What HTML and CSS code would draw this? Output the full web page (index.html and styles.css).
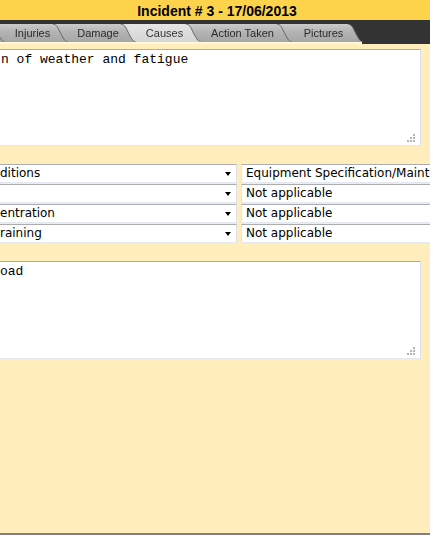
FILE: index.html
```html
<!DOCTYPE html>
<html>
<head>
<meta charset="utf-8">
<link rel="stylesheet" href="styles.css">
</head>
<body>
<div class="page">
  <header class="titlebar">Incident # 3 - 17/06/2013</header>
  <nav class="tabbar">
    <div class="tabstrip">
      <div class="tab tab-general"><div class="tab-face"></div></div>
      <div class="tab tab-injuries"><div class="tab-face"><span>Injuries</span></div></div>
      <div class="tab tab-damage"><div class="tab-face"><span>Damage</span></div></div>
      <div class="tab tab-causes active"><div class="tab-face"><span>Causes</span></div></div>
      <div class="tab tab-action"><div class="tab-face"><span>Action Taken</span></div></div>
      <div class="tab tab-pictures"><div class="tab-face"><span>Pictures</span></div></div>
    </div>
  </nav>
  <main class="form">
    <div class="textbox tb-first">n of weather and fatigue<svg class="grip" width="8" height="8" viewBox="0 0 8 8"><rect x="6" y="0" width="2" height="2"/><rect x="3" y="3" width="2" height="2"/><rect x="6" y="3" width="2" height="2"/><rect x="0" y="6" width="2" height="2"/><rect x="3" y="6" width="2" height="2"/><rect x="6" y="6" width="2" height="2"/></svg></div>
    <div class="select-grid">
      <div class="select"><span class="select-text">ditions</span><span class="arrow"></span></div>
      <div class="select select-right"><span class="select-text">Equipment Specification/Mainte</span></div>
      <div class="select"><span class="select-text"></span><span class="arrow"></span></div>
      <div class="select select-right"><span class="select-text">Not applicable</span></div>
      <div class="select"><span class="select-text">entration</span><span class="arrow"></span></div>
      <div class="select select-right"><span class="select-text">Not applicable</span></div>
      <div class="select"><span class="select-text">raining</span><span class="arrow"></span></div>
      <div class="select select-right"><span class="select-text">Not applicable</span></div>
    </div>
    <div class="textbox tb-second">oad<svg class="grip" width="8" height="8" viewBox="0 0 8 8"><rect x="6" y="0" width="2" height="2"/><rect x="3" y="3" width="2" height="2"/><rect x="6" y="3" width="2" height="2"/><rect x="0" y="6" width="2" height="2"/><rect x="3" y="6" width="2" height="2"/><rect x="6" y="6" width="2" height="2"/></svg></div>
  </main>
</div>
</body>
</html>
```
FILE: styles.css
```css
html, body {
  margin: 0;
  padding: 0;
}
body {
  width: 430px;
  height: 535px;
  overflow: hidden;
  background: #ffedbc;
}
.page {
  width: 430px;
  height: 535px;
  box-sizing: border-box;
  border-bottom: 2px solid #7f7f7f;
  background: #ffedbc;
  overflow: hidden;
  display: flex;
  flex-direction: column;
}
.titlebar {
  height: 20px;
  line-height: 23px;
  background: #fed34c;
  text-align: center;
  font-family: "Liberation Sans", Arial, sans-serif;
  font-weight: bold;
  font-size: 14px;
  color: #000;
  padding-left: 4px;
  box-sizing: border-box;
  flex: none;
}
.tabbar {
  height: 24px;
  box-sizing: border-box;
  padding-top: 4px;
  background: #333333;
  flex: none;
}
.tabstrip {
  display: flex;
  width: max-content;
  margin-left: -60px;
  border-bottom: 2px solid #fff6dc;
}
.tab {
  position: relative;
  height: 18px;
  flex: none;
  filter: drop-shadow(1px 0 0 #6a6a6a);
}
.tab + .tab {
  margin-left: -14px;
}
.tab-face {
  height: 100%;
  box-sizing: border-box;
  padding: 0 6px 0 14px;
  text-align: center;
  font-family: "Liberation Sans", Arial, sans-serif;
  font-size: 11px;
  line-height: 18px;
  color: #2a2a2a;
  white-space: nowrap;
  background: linear-gradient(#cbcbcb, #b3b3b3 45%, #a6a6a6);
  clip-path: polygon(0 100%, 0 3px, 1px 1px, 3px 0, calc(100% - 15px) 0, calc(100% - 12px) 1px, calc(100% - 10px) 3px, calc(100% - 6px) 11px, calc(100% - 3px) 16px, 100% 100%);
}
.tab.active .tab-face {
  background: linear-gradient(#e6e6e6, #dcdcdc 50%, #d6d6d6);
  color: #333;
}
.tab-general { width: 64px; z-index: 6; }
.tab-injuries { width: 77px; z-index: 5; }
.tab-damage { width: 82px; z-index: 4; }
.tab-causes { width: 79px; z-index: 3; }
.tab-action { width: 105px; z-index: 2; }
.tab-pictures { width: 85px; z-index: 1; }

.form {
  margin-left: -20px;
  padding-top: 5px;
  display: flex;
  flex-direction: column;
}
.textbox {
  position: relative;
  width: 441px;
  box-sizing: border-box;
  background: #fff;
  border: 1px solid;
  border-color: #abadb3 #dbdfe6 #e3e9ef #e2e3ea;
  padding: 2px 4px 2px 20px;
  font-family: "Liberation Mono", "Courier New", monospace;
  font-size: 13px;
  line-height: 15px;
  color: #000;
  white-space: pre;
}
.tb-first {
  height: 97px;
}
.tb-second {
  height: 98px;
  margin-top: 18px;
  padding-left: 19px;
}
.grip {
  position: absolute;
  right: 5px;
  bottom: 3px;
  fill: #b4b4b4;
}
.select-grid {
  margin-top: 18px;
  display: grid;
  grid-template-columns: 257px 190px;
  column-gap: 4px;
  row-gap: 1px;
}
.select {
  height: 19px;
  box-sizing: border-box;
  background: #fff;
  border: 1px solid;
  border-color: #abadb3 #dbdfe6 #e3e9ef #e2e3ea;
  display: flex;
  align-items: center;
  padding-left: 19px;
  font-family: "DejaVu Sans", Verdana, sans-serif;
  font-size: 12px;
  line-height: 17px;
  color: #000;
  white-space: nowrap;
  overflow: hidden;
}
.select-right {
  padding-left: 4px;
  border-right: none;
}
.select-text {
  flex: 1 1 auto;
  overflow: hidden;
}
.arrow {
  flex: none;
  width: 0;
  height: 0;
  border-left: 3.5px solid transparent;
  border-right: 3.5px solid transparent;
  border-top: 4px solid #000;
  margin-right: 5px;
}
```
